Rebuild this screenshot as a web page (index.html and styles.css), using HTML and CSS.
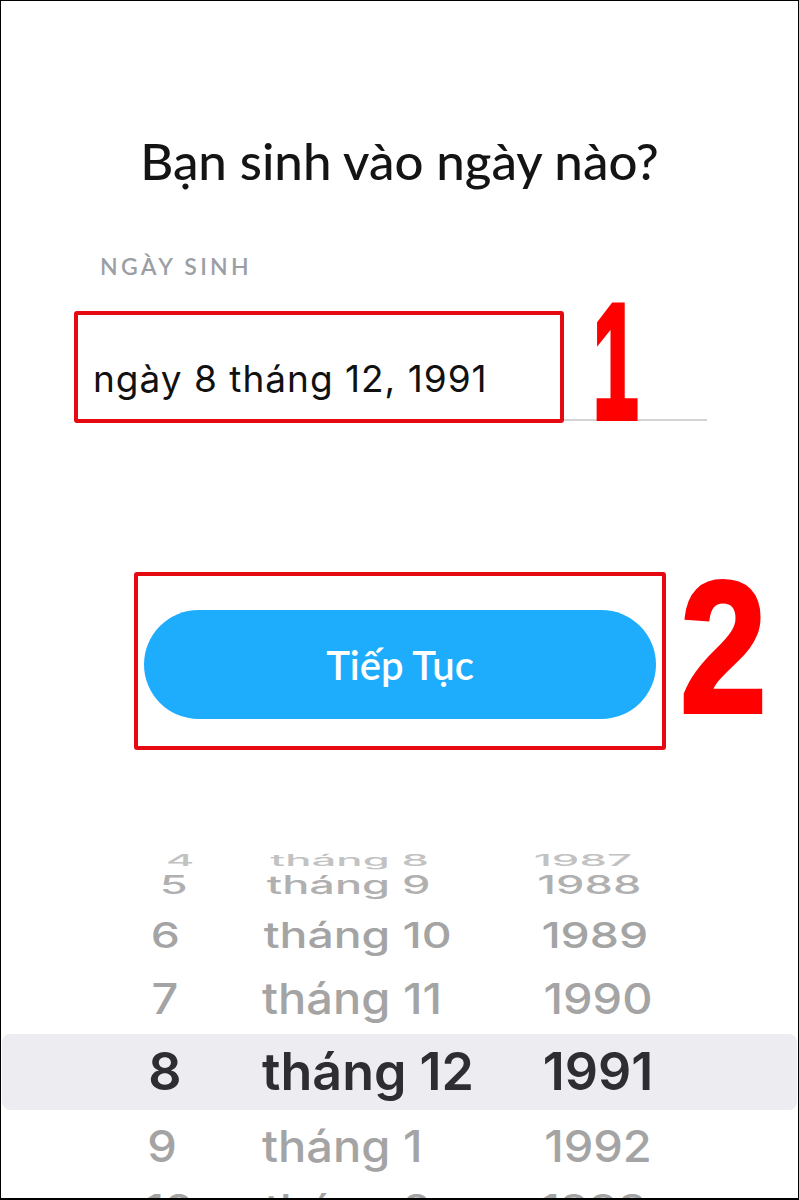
FILE: index.html
```html
<!DOCTYPE html>
<html lang="vi">
<head>
<meta charset="utf-8">
<title>Ngày sinh</title>
<link rel="stylesheet" href="styles.css">
</head>
<body>
<div class="screen">
  <h1 class="title">Bạn sinh vào ngày nào?</h1>
  <div class="label">NGÀY SINH</div>
  <div class="input"><span class="value">ngày 8 tháng 12, 1991</span></div>
  <button class="btn">Tiếp Tục</button>
  <div class="picker">
    <div class="row r4"><span class="d">4</span><span class="m">tháng 8</span><span class="y">1987</span></div>
    <div class="row r5"><span class="d">5</span><span class="m">tháng 9</span><span class="y">1988</span></div>
    <div class="row r6"><span class="d">6</span><span class="m">tháng 10</span><span class="y">1989</span></div>
    <div class="row r7"><span class="d">7</span><span class="m">tháng 11</span><span class="y">1990</span></div>
    <div class="row r8"><span class="d">8</span><span class="m">tháng 12</span><span class="y">1991</span></div>
    <div class="row r9"><span class="d">9</span><span class="m">tháng 1</span><span class="y">1992</span></div>
    <div class="row r10"><span class="d">10</span><span class="m">tháng 2</span><span class="y">1993</span></div>
  </div>

  <div class="mark mark-input"></div>
  <div class="mark mark-btn"></div>
  <span class="num num-1">1</span>
  <span class="num num-2">2</span>
</div>
</body>
</html>
```

FILE: styles.css
```css
html, body {
  margin: 0;
  padding: 0;
  background: #fff;
}

.screen {
  position: relative;
  width: 799px;
  height: 1200px;
  box-sizing: border-box;
  border: 1px solid #000;
  border-bottom-width: 2px;
  background: #fff;
  overflow: hidden;
  display: flex;
  flex-direction: column;
}

.title {
  margin: 134px 0 0 0;
  font-family: "Lato", "Liberation Sans", sans-serif;
  font-weight: 500;
  font-size: 51px;
  line-height: 1;
  color: #141414;
  text-align: center;
}

.label {
  margin: 69px 0 0 99px;
  font-family: "Lato", "Liberation Sans", sans-serif;
  font-weight: 600;
  font-size: 23px;
  line-height: 1;
  letter-spacing: 3.3px;
  color: #9b9fa4;
}

.input {
  margin: 82px 0 0 92px;
  width: 614px;
  padding-bottom: 22px;
  border-bottom: 2px solid #d3d3d6;
}

.value {
  display: block;
  font-family: "Inter", "Liberation Sans", sans-serif;
  font-weight: 400;
  font-size: 37px;
  line-height: 1;
  letter-spacing: 1px;
  color: #111;
}

.btn {
  margin: 189px 0 0 143px;
  width: 512px;
  height: 109px;
  border: none;
  border-radius: 55px;
  background: #1eacfc;
  color: #fff;
  font-family: "Lato", "Liberation Sans", sans-serif;
  font-weight: 600;
  font-size: 40px;
  line-height: 1;
  padding: 0;
  display: flex;
  align-items: center;
  justify-content: center;
}

.picker {
  margin-top: 129px;
  flex: 1;
  overflow: hidden;
  display: flex;
  flex-direction: column;
}

.row {
  flex: none;
  display: grid;
  grid-template-columns: 90px 302px 172px;
  padding-left: 119px;
  align-items: center;
  font-family: "Inter", "Liberation Sans", sans-serif;
  font-weight: 500;
  font-size: 47px;
  line-height: 1;
  color: #a4a4a4;
  transform-origin: 380px 50%;
}

.row .d { text-align: center; }
.row .m { padding-left: 52px; white-space: nowrap; }
.row .y { text-align: center; }

.r4 { height: 14px; transform: scale(0.93, 0.33); color: #c2c2c2; }
.r5 { height: 44px; transform: scale(0.96, 0.535); color: #b0b0b0; }
.r6 { height: 56px; transform: scale(0.985, 0.76); }
.r6 .d { transform: translateX(-3px); }
.r7 { height: 72px; transform: scale(1, 0.915); }
.r8 {
  height: 76px;
  margin: 0 1px;
  padding-left: 118px;
  border-radius: 8px;
  background: #edecf1;
  font-size: 52px;
  font-weight: 600;
  color: #2e2d32;
}
.r9 { height: 70px; transform: scale(1, 0.945); }
.r9 .d { transform: translateX(-3px); }
.r10 { height: 56px; transform: scale(0.98, 0.8); }

/* annotations */
.mark {
  position: absolute;
  box-sizing: border-box;
  border: 4px solid #e50a12;
  border-radius: 3px;
}
.mark-input { left: 73px; top: 310px; width: 490px; height: 112px; }
.mark-btn { left: 133px; top: 571px; width: 532px; height: 178px; }

.num {
  position: absolute;
  font-family: "Liberation Sans", "Arimo", sans-serif;
  font-weight: 700;
  line-height: 1;
  color: #ff0000;
  transform-origin: 0 0;
}
.num-1 {
  left: 592px;
  top: 279px;
  font-size: 163px;
  transform: scaleX(0.5);
  -webkit-text-stroke: 6px #ff0000;
}
.num-2 {
  left: 679px;
  top: 552px;
  font-size: 188px;
  transform: scaleX(0.83);
  -webkit-text-stroke: 4px #ff0000;
}
```
